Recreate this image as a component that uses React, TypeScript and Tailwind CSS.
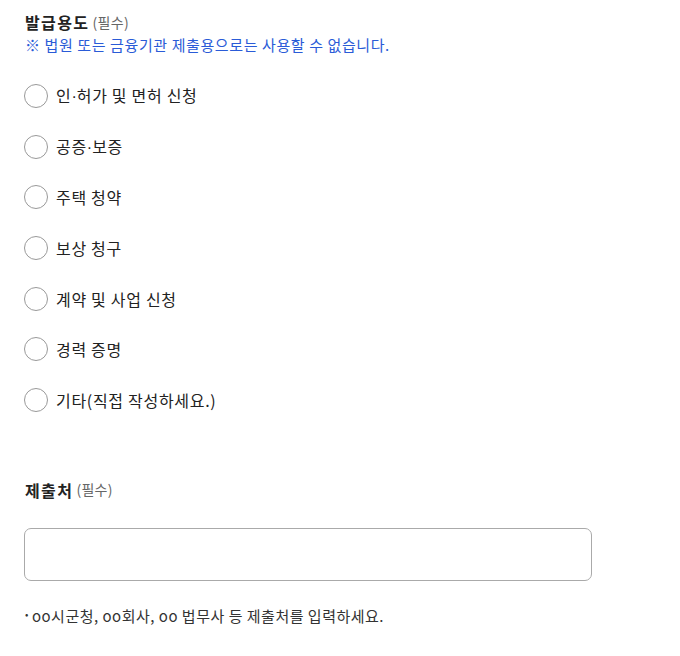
import React from "react";

const options: string[][] = [
  ["인", "허가 및 면허 신청"],
  ["공증", "보증"],
  ["주택 청약"],
  ["보상 청구"],
  ["계약 및 사업 신청"],
  ["경력 증명"],
  ["기타(직접 작성하세요.)"],
];

export default function App() {
  return (
    <div
      className="w-[680px] h-[656px] bg-white text-[#222] px-[25px] pt-[10px]"
      style={{ fontFamily: '"Noto Sans CJK KR", "Noto Sans", sans-serif' }}
    >
      <div className="h-[24px] flex items-center">
        <span className="text-[16px] font-bold tracking-[1.4px]">발급용도</span>
        <span className="ml-[3px] text-[14px] text-[#666] tracking-[0.3px]">(필수)</span>
      </div>
      <div className="h-[22px] flex items-center text-[15px] text-[#2a5bd7] tracking-[0.6px]">
        ※ 법원 또는 금융기관 제출용으로는 사용할 수 없습니다.
      </div>
      <div className="mt-[28px] flex flex-col gap-[26.67px]">
        {options.map((o) => (
          <label key={o.join("")} className="flex items-center h-[24px] -ml-[1px]">
            <span className="w-[24px] h-[24px] rounded-full border border-[#999] bg-white shrink-0" />
            <span className="ml-[8px] text-[16px] tracking-[0.7px] whitespace-pre">
              {o.length === 2 ? (
                <>
                  {o[0]}
                  <span className="font-['Liberation_Sans',sans-serif] tracking-normal">·</span>
                  {o[1]}
                </>
              ) : (
                o[0]
              )}
            </span>
          </label>
        ))}
      </div>
      <div className="mt-[66px] h-[24px] flex items-center">
        <span className="text-[16px] font-bold tracking-[1.4px]">제출처</span>
        <span className="ml-[3px] text-[14px] text-[#666] tracking-[0.3px]">(필수)</span>
      </div>
      <div className="mt-[26px] -ml-[1px] w-[568px] h-[53px] rounded-[7px] border border-[#aaa]" />
      <div className="mt-[24px] flex items-center h-[22px] text-[15px] text-[#333] tracking-[0.5px]">
        <span className="text-[10px] mr-[3px] -mt-[4px]">•</span>
        oo시군청, oo회사, oo 법무사 등 제출처를 입력하세요.
      </div>
    </div>
  );
}
